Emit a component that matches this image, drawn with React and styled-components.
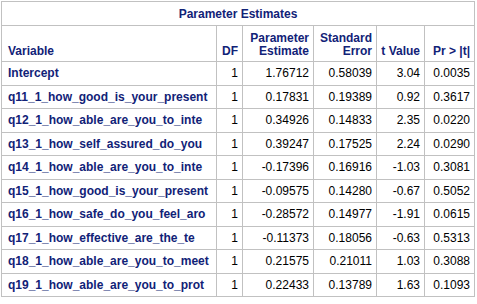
import React from "react";
import styled, { createGlobalStyle } from "styled-components";

const GlobalStyle = createGlobalStyle`
  html, body {
    margin: 0;
    padding: 0;
    background: #ffffff;
  }
  body {
    font-family: "Liberation Sans", Arial, sans-serif;
  }
`;

const Page = styled.div`
  padding: 1px 0 0 1px;
`;

const Table = styled.table`
  border-collapse: collapse;
  table-layout: fixed;
  width: 474px;
  font-family: "Liberation Sans", Arial, sans-serif;
  font-size: 12px;
  line-height: 14px;
  border: 1px solid #c1c1c1;
`;

const TitleCell = styled.th`
  height: 23px;
  padding: 0 6px;
  border: 1px solid #c1c1c1;
  color: #112277;
  font-weight: bold;
  text-align: center;
  vertical-align: middle;
`;

const HeadCell = styled.th`
  height: 32px;
  padding: 0 4px 3px ${(p) => (p.$left ? "6px" : "2px")};
  border: 1px solid #c1c1c1;
  color: #112277;
  font-weight: bold;
  vertical-align: bottom;
  text-align: ${(p) => (p.$left ? "left" : "right")};
  white-space: nowrap;
  line-height: 13px;
`;

const RowHead = styled.th`
  height: 22.5px;
  padding: 0 6px;
  border: 1px solid #c1c1c1;
  color: #112277;
  font-weight: bold;
  text-align: left;
  vertical-align: middle;
  white-space: nowrap;
  overflow: hidden;
`;

const Cell = styled.td`
  height: 22.5px;
  padding: 0 4px 0 2px;
  border: 1px solid #c1c1c1;
  color: #000000;
  text-align: right;
  vertical-align: middle;
  white-space: nowrap;
`;

const rows = [
  ["Intercept", "1", "1.76712", "0.58039", "3.04", "0.0035"],
  ["q11_1_how_good_is_your_present", "1", "0.17831", "0.19389", "0.92", "0.3617"],
  ["q12_1_how_able_are_you_to_inte", "1", "0.34926", "0.14833", "2.35", "0.0220"],
  ["q13_1_how_self_assured_do_you", "1", "0.39247", "0.17525", "2.24", "0.0290"],
  ["q14_1_how_able_are_you_to_inte", "1", "-0.17396", "0.16916", "-1.03", "0.3081"],
  ["q15_1_how_good_is_your_present", "1", "-0.09575", "0.14280", "-0.67", "0.5052"],
  ["q16_1_how_safe_do_you_feel_aro", "1", "-0.28572", "0.14977", "-1.91", "0.0615"],
  ["q17_1_how_effective_are_the_te", "1", "-0.11373", "0.18056", "-0.63", "0.5313"],
  ["q18_1_how_able_are_you_to_meet", "1", "0.21575", "0.21011", "1.03", "0.3088"],
  ["q19_1_how_able_are_you_to_prot", "1", "0.22433", "0.13789", "1.63", "0.1093"],
];

const widths = [215, 26, 71, 63, 48, 50];

export default function App() {
  return (
    <Page>
      <GlobalStyle />
      <Table>
        <colgroup>
          {widths.map((w, i) => (
            <col key={i} style={{ width: w }} />
          ))}
        </colgroup>
        <thead>
          <tr>
            <TitleCell colSpan={6}>Parameter Estimates</TitleCell>
          </tr>
          <tr>
            <HeadCell $left>Variable</HeadCell>
            <HeadCell>DF</HeadCell>
            <HeadCell>
              Parameter
              <br />
              Estimate
            </HeadCell>
            <HeadCell>
              Standard
              <br />
              Error
            </HeadCell>
            <HeadCell>t Value</HeadCell>
            <HeadCell>Pr &gt; |t|</HeadCell>
          </tr>
        </thead>
        <tbody>
          {rows.map((r) => (
            <tr key={r[0]}>
              <RowHead>{r[0]}</RowHead>
              {r.slice(1).map((v, i) => (
                <Cell key={i}>{v}</Cell>
              ))}
            </tr>
          ))}
        </tbody>
      </Table>
    </Page>
  );
}
